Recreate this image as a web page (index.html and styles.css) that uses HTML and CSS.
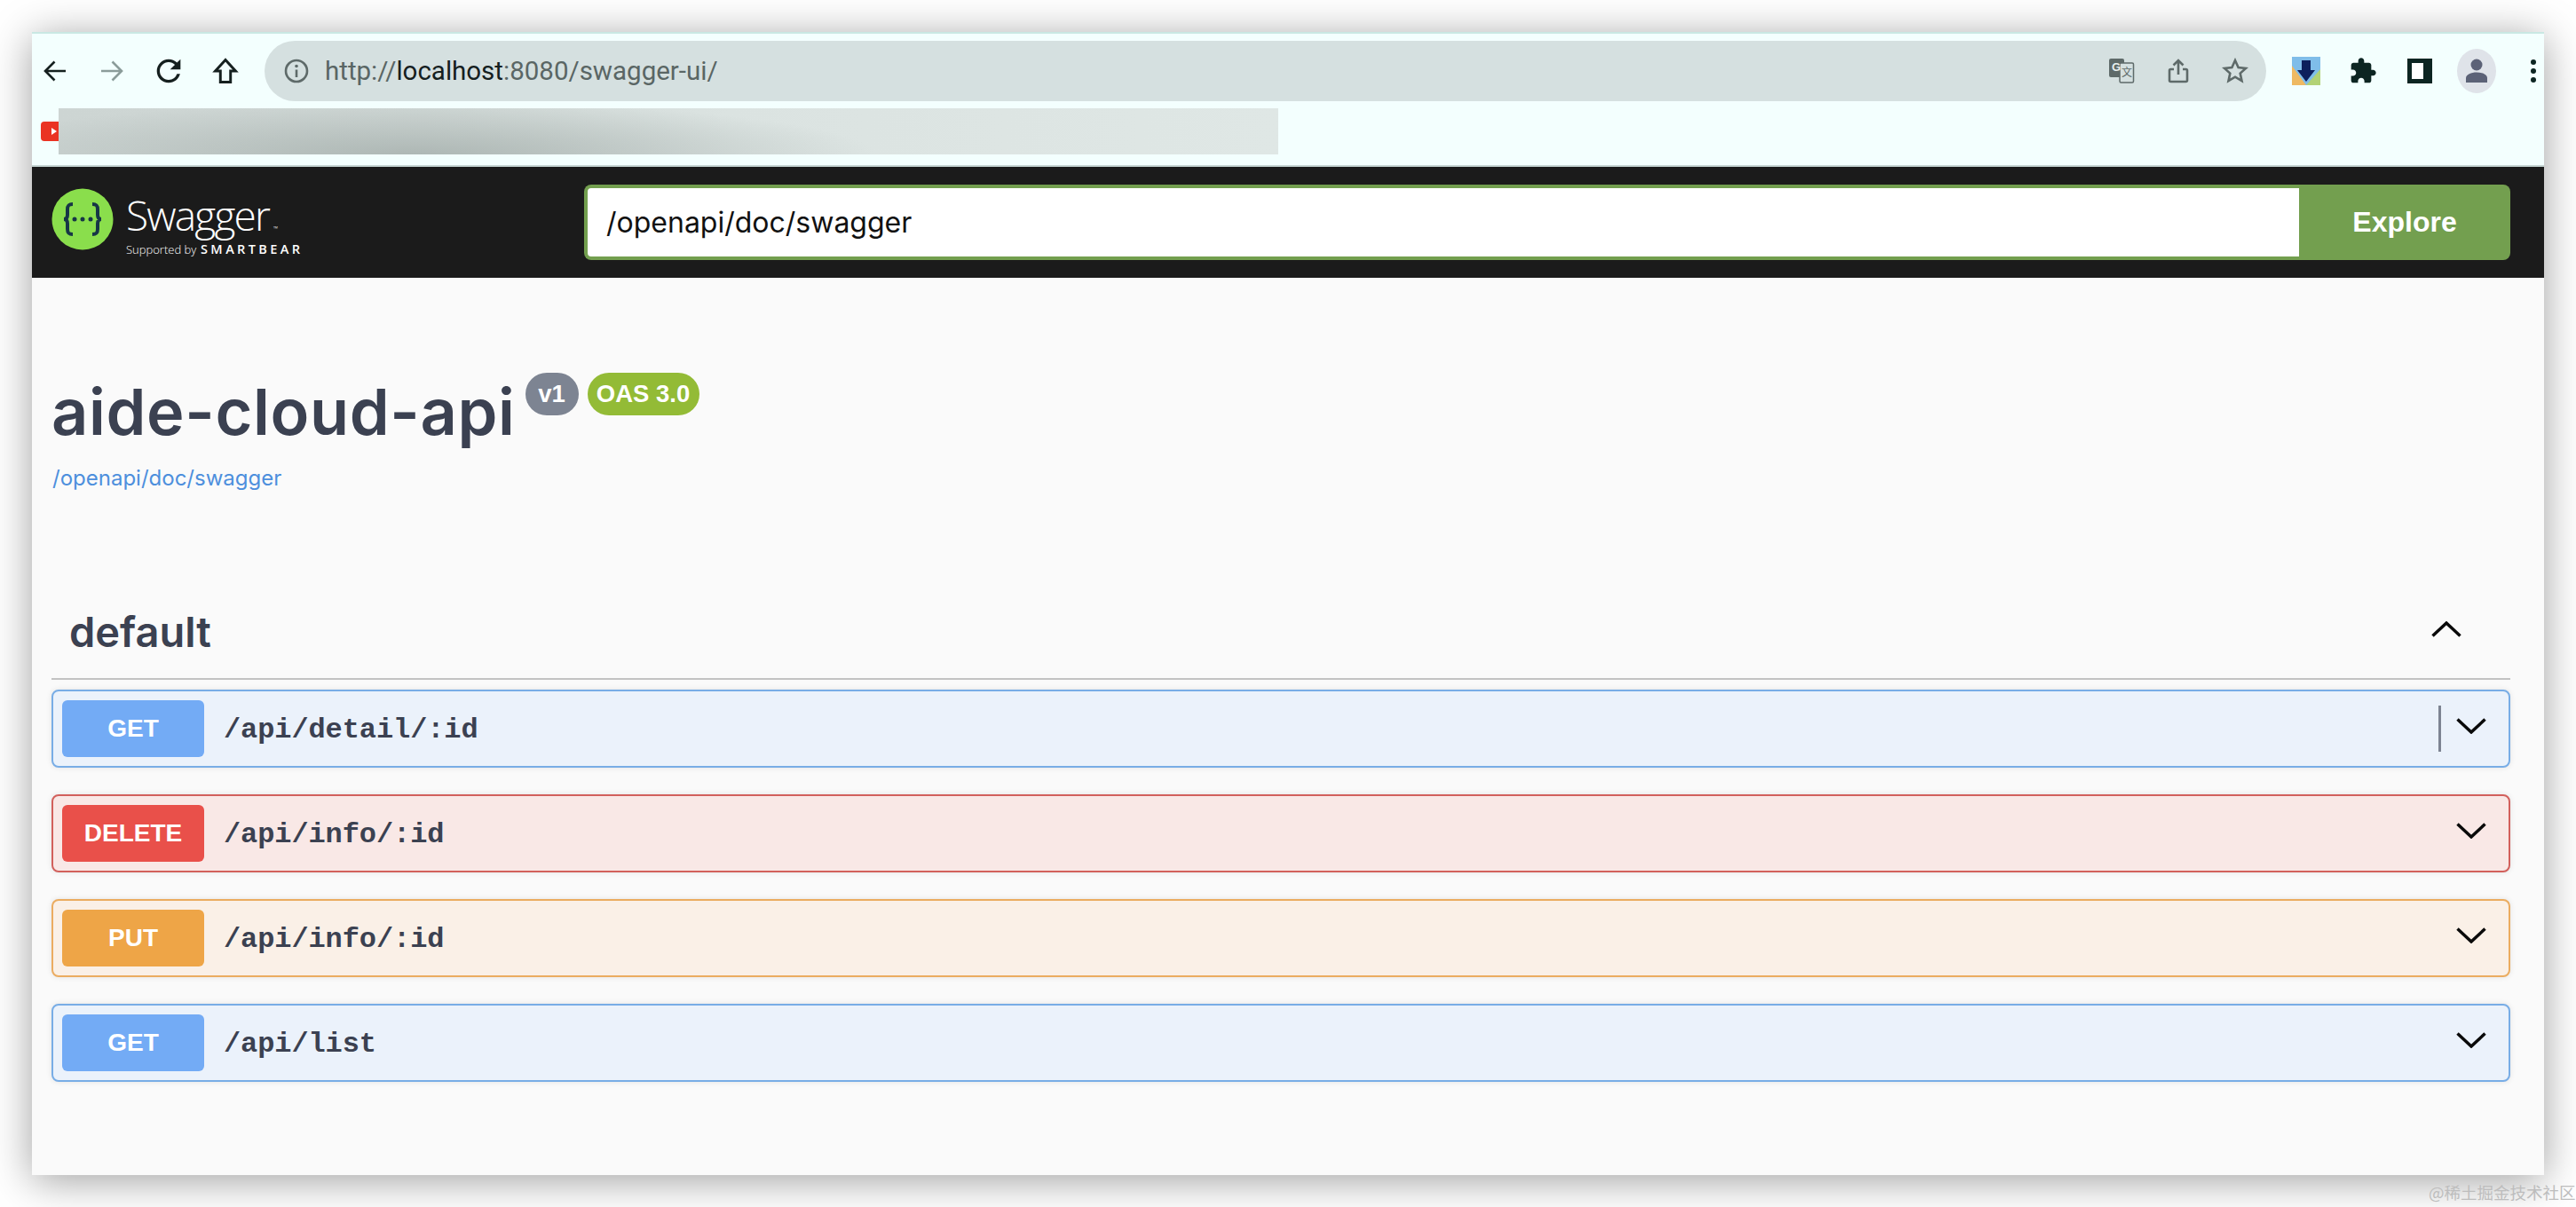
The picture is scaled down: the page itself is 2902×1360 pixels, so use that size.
FILE: index.html
```
<!DOCTYPE html>
<html lang="en">
<head>
<meta charset="utf-8">
<title>Swagger UI</title>
<link rel="stylesheet" href="styles.css">
</head>
<body>
<div class="window">
  <header class="chrome">
    <div class="nav-row">
      <div class="nav-btn"><svg class="ic26" viewBox="0 0 26 26"><path class="st-dark" d="M25 13H2M12.5 2.5 2 13l10.500 10.500"/></svg></div>
      <div class="nav-btn"><svg class="ic26" viewBox="0 0 26 26"><path class="st-grey" d="M1 13h23M13.500 2.500 24 13 13.500 23.500"/></svg></div>
      <div class="nav-btn"><svg class="ic-reload" viewBox="0 0 24 24"><path class="fl-dark" d="M17.650 6.350A7.958 7.958 0 0 0 12 4c-4.420 0-7.990 3.580-7.990 8s3.570 8 7.990 8c3.730 0 6.840-2.550 7.730-6h-2.080A5.990 5.990 0 0 1 12 18c-3.310 0-6-2.690-6-6s2.690-6 6-6c1.660 0 3.140.690 4.220 1.780L13 11h7V4l-2.350 2.350z"/></svg></div>
      <div class="nav-btn"><svg class="ic-home" viewBox="0 0 28 28"><path class="st-dark" d="M14 3 4 14h5v11h10V14h5z"/></svg></div>
      <div class="omnibox">
        <svg class="info" viewBox="0 0 28 28"><circle class="st-url" cx="14" cy="14" r="12"/><path class="st-url" d="M14 12.500V21"/><circle class="fl-url" cx="14" cy="8.500" r="1.800"/></svg>
        <div class="url">http://<span class="url-host">localhost</span>:8080/swagger-ui/</div>
        <div class="omni-actions">
          <div class="omni-btn"><svg class="ic30" viewBox="0 0 30 30"><rect class="tr-back" x="1" y="1" width="17" height="21" rx="2"/><rect class="tr-front" x="13" y="6" width="15.500" height="22" rx="1.500"/><text class="tr-g" x="4" y="15">G</text><text class="tr-a" x="15" y="21">文</text></svg></div>
          <div class="omni-btn"><svg class="ic30" viewBox="0 0 24 30"><path class="st-url" d="M12 19V3M6.500 8.500 12 3l5.500 5.500M7 13H3.500a1.500 1.500 0 0 0-1.500 1.500v11A1.500 1.500 0 0 0 3.500 27h17a1.500 1.500 0 0 0 1.500-1.500v-11a1.500 1.500 0 0 0-1.500-1.500H17"/></svg></div>
          <div class="omni-btn"><svg class="ic30" viewBox="0 0 30 30"><path class="st-url" d="m15 3 3.600 8 8.400.900-6.300 5.700 1.800 8.600L15 21.700l-7.500 4.500 1.800-8.600L3 11.900l8.400-.900z"/></svg></div>
        </div>
      </div>
      <div class="ext-area">
        <div class="ext-btn"><svg class="ext-logo" viewBox="0 0 32 32"><rect class="e-sky" width="32" height="32"/><path class="e-or" d="M0 10 16 32H0z"/><path class="e-gr" d="M32 14 16 32h16z"/><path class="e-nv" d="M11 4h10v11h5L16 28 6 15h5z"/></svg></div>
        <div class="ext-btn"><svg class="ic32" viewBox="0 0 24 24"><path class="fl-teal" d="M20.500 11H19V7c0-1.100-.9-2-2-2h-4V3.500C13 2.120 11.880 1 10.500 1S8 2.120 8 3.500V5H4c-1.100 0-1.990.9-1.990 2v3.800H3.500c1.490 0 2.700 1.210 2.700 2.700s-1.210 2.700-2.700 2.700H2V20c0 1.100.9 2 2 2h3.800v-1.500c0-1.490 1.210-2.700 2.700-2.700 1.490 0 2.700 1.210 2.700 2.700V22H17c1.100 0 2-.9 2-2v-4h1.500c1.380 0 2.500-1.120 2.500-2.500S21.880 11 20.500 11z"/></svg></div>
        <div class="ext-btn"><div class="side-panel"></div></div>
        <div class="ext-btn"><svg class="avatar" viewBox="0 0 44 50"><ellipse class="av-bg" cx="22" cy="25" rx="22" ry="25"/><circle class="av-fg" cx="22" cy="18" r="6.500"/><path class="av-fg" d="M10 38v-5c0-4 6-6.500 12-6.500s12 2.500 12 6.500v5z"/></svg></div>
        <div class="ext-last"><svg class="dots" viewBox="0 0 16 30"><circle class="fl-teal" cx="8" cy="5" r="3"/><circle class="fl-teal" cx="8" cy="15" r="3"/><circle class="fl-teal" cx="8" cy="25" r="3"/></svg></div>
      </div>
    </div>
    <div class="bookmarks">
      <svg class="yt" viewBox="0 0 20 22"><rect class="yt-red" width="30" height="22" rx="4"/><path class="yt-play" d="M12 7l6 4-6 4z"/></svg>
      <div class="blurred"></div>
    </div>
  </header>

  <div class="topbar">
    <div class="logo">
      <svg class="logo-mark" viewBox="0 0 70 70">
        <circle class="lm-green" cx="35" cy="35" r="34.500"/>
        <path class="lm-brace" d="M24 18c-5 0-6 2-6 6v6c0 3-1 5-4 5 3 0 4 2 4 5v6c0 4 1 6 6 6M46 18c5 0 6 2 6 6v6c0 3 1 5 4 5-3 0-4 2-4 5v6c0 4-1 6-6 6"/>
        <circle class="lm-dot" cx="26" cy="35" r="2.500"/><circle class="lm-dot" cx="35" cy="35" r="2.500"/><circle class="lm-dot" cx="44" cy="35" r="2.500"/>
      </svg>
      <div class="logo-text">
        <div class="logo-name">Swagger<span class="logo-tm">™</span></div>
        <div class="logo-sub"><span class="logo-by">Supported by</span><span class="logo-bear">SMARTBEAR</span></div>
      </div>
    </div>
    <div class="explore-form">
      <div class="explore-input">/openapi/doc/swagger</div>
      <div class="explore-btn">Explore</div>
    </div>
  </div>

  <main class="content">
    <div class="title-row">
      <h1 class="title">aide-cloud-api</h1>
      <span class="badge badge-version">v1</span>
      <span class="badge badge-oas">OAS 3.0</span>
    </div>
    <a class="spec-link">/openapi/doc/swagger</a>

    <div class="tag-header">
      <h2 class="tag-name">default</h2>
      <svg class="chev-up" viewBox="0 0 34 18"><path class="chev" d="M1.500 16.500 17 2l15.500 14.500"/></svg>
    </div>

    <div class="ops">
      <div class="op op-get">
        <span class="method">GET</span><span class="path">/api/detail/:id</span>
        <span class="caret"></span>
        <svg class="chev-down" viewBox="0 0 34 18"><path class="chev" d="M1.500 1.500 17 16 32.500 1.500"/></svg>
      </div>
      <div class="op op-delete">
        <span class="method">DELETE</span><span class="path">/api/info/:id</span>
        <svg class="chev-down" viewBox="0 0 34 18"><path class="chev" d="M1.500 1.500 17 16 32.500 1.500"/></svg>
      </div>
      <div class="op op-put">
        <span class="method">PUT</span><span class="path">/api/info/:id</span>
        <svg class="chev-down" viewBox="0 0 34 18"><path class="chev" d="M1.500 1.500 17 16 32.500 1.500"/></svg>
      </div>
      <div class="op op-get">
        <span class="method">GET</span><span class="path">/api/list</span>
        <svg class="chev-down" viewBox="0 0 34 18"><path class="chev" d="M1.500 1.500 17 16 32.500 1.500"/></svg>
      </div>
    </div>
  </main>
</div>
<div class="watermark">@稀土掘金技术社区</div>
</body>
</html>
```
FILE: styles.css
```
* { box-sizing: border-box; }
html, body { margin: 0; height: 100%; }
body {
  position: relative;
  width: 2902px;
  height: 1360px;
  padding: 36px;
  overflow: hidden;
  background: #fff;
  font-family: "Liberation Sans", Arial, sans-serif;
  color: #3b4151;
}
.window {
  width: 2830px;
  height: 1288px;
  display: flex;
  flex-direction: column;
  background: #fafafa;
  box-shadow: 0 6px 44px rgba(0, 0, 0, .38);
}

/* Browser chrome */
.chrome {
  height: 152px;
  background: #f3fffe;
  border-top: 2px solid #c9e8e3;
  border-bottom: 2px solid #c4d4d2;
}
.nav-row {
  height: 84px;
  padding: 8px 0;
  display: flex;
  align-items: stretch;
}
.nav-btn {
  width: 52px;
  margin-right: 12px;
  display: flex;
  align-items: center;
  justify-content: center;
}
.nav-btn:nth-child(4) { margin-right: 18px; }
.ic26 { width: 26px; height: 26px; }
.ic-reload { width: 40px; height: 40px; flex: none; }
.ic-home { width: 32px; height: 32px; }
.ic30 { width: 30px; height: 30px; }
.ic32 { width: 32px; height: 32px; }
.st-dark, .st-grey, .st-url { fill: none; stroke-width: 2.600; }
.st-dark { stroke: #15201f; }
.st-grey { stroke: #8b9c9a; }
.st-url { stroke: #5e6a69; }
.fl-dark { fill: #15201f; }
.fl-url { fill: #5e6a69; }
.fl-teal { fill: #0c2522; }

.omnibox {
  width: 2255px;
  flex: none;
  display: flex;
  align-items: center;
  padding-left: 22px;
  background: #d5e0e0;
  border-radius: 34px;
}
.info { width: 28px; height: 28px; margin-right: 18px; }
.url {
  flex: 1;
  font: 29.500px "Roboto", "Liberation Sans", sans-serif;
  color: #5a6665;
}
.url-host { color: #15201f; }
.omni-actions { display: flex; margin-right: 3px; }
.omni-btn {
  width: 64px;
  display: flex;
  justify-content: center;
}
.tr-back { fill: #5e6a69; }
.tr-front { fill: #d5e0e0; stroke: #5e6a69; stroke-width: 1.500; }
.tr-g { font: bold 13px "Liberation Sans", sans-serif; fill: #e8efef; }
.tr-a { font: 12px "Noto Sans CJK SC", sans-serif; fill: #5e6a69; }

.ext-area { display: flex; padding-left: 13px; flex: 1; }
.ext-btn {
  width: 64px;
  display: flex;
  align-items: center;
  justify-content: center;
}
.ext-last { width: 44px; padding-left: 24px; display: flex; align-items: center; }
.ext-logo { width: 32px; height: 32px; }
.e-sky { fill: #7fbde9; }
.e-or { fill: #eeb962; }
.e-gr { fill: #b2d276; }
.e-nv { fill: #0d1f5c; }
.side-panel {
  width: 28px;
  height: 28px;
  background: #fff;
  border: solid #0c2522;
  border-width: 5px 10px 5px 5px;
}
.avatar { width: 44px; height: 50px; }
.av-bg { fill: #dfe3e9; }
.av-fg { fill: #5c6277; }
.dots { width: 16px; height: 30px; }

.bookmarks {
  height: 64px;
  padding: 0 0 12px 10px;
  display: flex;
  align-items: center;
}
.yt { width: 20px; height: 22px; flex: none; }
.yt-red { fill: #ea3323; }
.yt-play { fill: #fff; }
.blurred {
  width: 1374px;
  height: 52px;
  background:
    radial-gradient(ellipse 520px 60px at 400px 100%, rgba(170, 180, 177, .9), rgba(170, 180, 177, 0)),
    linear-gradient(90deg, #cdd5d3 0, #d0d8d6 30%, #dbe3e1 55%, #dfe7e5 100%);
}

/* Swagger top bar */
.topbar {
  height: 125px;
  flex: none;
  padding: 20px 38px 20px 22px;
  display: flex;
  align-items: center;
  background: #1b1b1b;
}
.logo { width: 600px; height: 70px; flex: none; display: flex; align-items: flex-start; margin-top: -8px; }
.logo-mark { width: 70px; height: 70px; flex: none; }
.lm-green { fill: #8ade4c; }
.lm-brace { fill: none; stroke: #173646; stroke-width: 4; }
.lm-dot { fill: #173646; }
.logo-text { margin-left: 14px; color: #fff; }
.logo-name {
  font: 300 46px/52px "Open Sans", sans-serif;
  letter-spacing: -1.800px;
  height: 60px;
  margin-top: 4px;
  white-space: nowrap;
}
.logo-tm { font-size: 7px; letter-spacing: 0; margin-left: 5px; }
.logo-sub {
  display: flex;
  align-items: baseline;
  height: 22px;
  margin-top: -6px;
  font: 300 13px/22px "Open Sans", sans-serif;
  white-space: nowrap;
}
.logo-by { width: 84px; flex: none; }
.logo-bear { font-size: 14.500px; font-weight: 600; letter-spacing: 3.400px; }
.explore-form { flex: 1; display: flex; height: 85px; }
.explore-input {
  flex: 1;
  padding-left: 21px;
  display: flex;
  align-items: center;
  background: #fff;
  border: 4px solid #739f4f;
  border-right: 0;
  border-radius: 8px 0 0 8px;
  font: 32px "Inter", "Liberation Sans", sans-serif;
  color: #111;
}
.explore-btn {
  width: 238px;
  display: flex;
  align-items: center;
  justify-content: center;
  background: #739f4f;
  border-radius: 0 8px 8px 0;
  font-size: 32px;
  font-weight: bold;
  color: #fff;
}

/* Page body */
.content { flex: 1; padding: 106px 38px 0 22px; }
.title-row { display: flex; align-items: flex-start; height: 88px; }
.title {
  margin: 0 11px 0 0;
  font: 600 72px/90px "Inter", "Liberation Sans", sans-serif;
  letter-spacing: .65px;
  color: #3b4151;
}
.badge {
  height: 48px;
  margin-top: 1px;
  margin-right: 10px;
  display: flex;
  align-items: center;
  justify-content: center;
  border-radius: 24px;
  font-size: 27.500px;
  font-weight: bold;
  color: #fff;
}
.badge-version { width: 60px; background: #7d8492; }
.badge-oas { width: 126px; background: #93bb36; }
.spec-link {
  display: block;
  margin: 17px 0 0 1px;
  font: 24px/30px "Inter", "Liberation Sans", sans-serif;
  color: #4d8fdd;
}
.tag-header {
  height: 107px;
  margin-top: 105px;
  padding: 0 55px 0 20px;
  display: flex;
  align-items: center;
  justify-content: space-between;
  border-bottom: 2px solid #c2c2c2;
}
.tag-name { margin: 0; font: 600 47px "Inter", "Liberation Sans", sans-serif; color: #3b4151; }
.chev-up, .chev-down { width: 34px; height: 18px; flex: none; }
.chev-up { margin-bottom: 6px; }
.chev { fill: none; stroke: #0a0a0a; stroke-width: 3.500; }

.ops { display: flex; flex-direction: column; gap: 30px; margin-top: 11px; }
.op {
  height: 88px;
  padding: 0 25.500px 0 10px;
  display: flex;
  align-items: center;
  border: 2.500px solid;
  border-radius: 8px;
  box-shadow: 0 0 6px rgba(0, 0, 0, .1);
}
.op .chev-down { margin-bottom: 7px; }
.op-get { background: #ebf2fb; border-color: #78ade6; }
.op-delete { background: #f9e8e6; border-color: #d2605c; }
.op-put { background: #faf0e7; border-color: #ebac60; }
.method {
  width: 160px;
  height: 64px;
  flex: none;
  display: flex;
  align-items: center;
  justify-content: center;
  border-radius: 6px;
  font-size: 28px;
  font-weight: bold;
  color: #fff;
}
.op-get .method { background: #73abf5; }
.op-delete .method { background: #e9504a; }
.op-put .method { background: #eea547; }
.path {
  flex: 1;
  margin-left: 22px;
  padding-top: 2px;
  font: bold 32px "Liberation Mono", "Courier New", monospace;
  letter-spacing: -.1px;
  color: #3b4151;
}
.caret {
  width: 3px;
  height: 52px;
  margin-right: 17px;
  background: #7d8492;
}
.watermark {
  position: absolute;
  left: 2736px;
  top: 1331px;
  font: 18.500px/24px "Noto Sans CJK SC", sans-serif;
  color: #bdbdbd;
  white-space: nowrap;
}
```
